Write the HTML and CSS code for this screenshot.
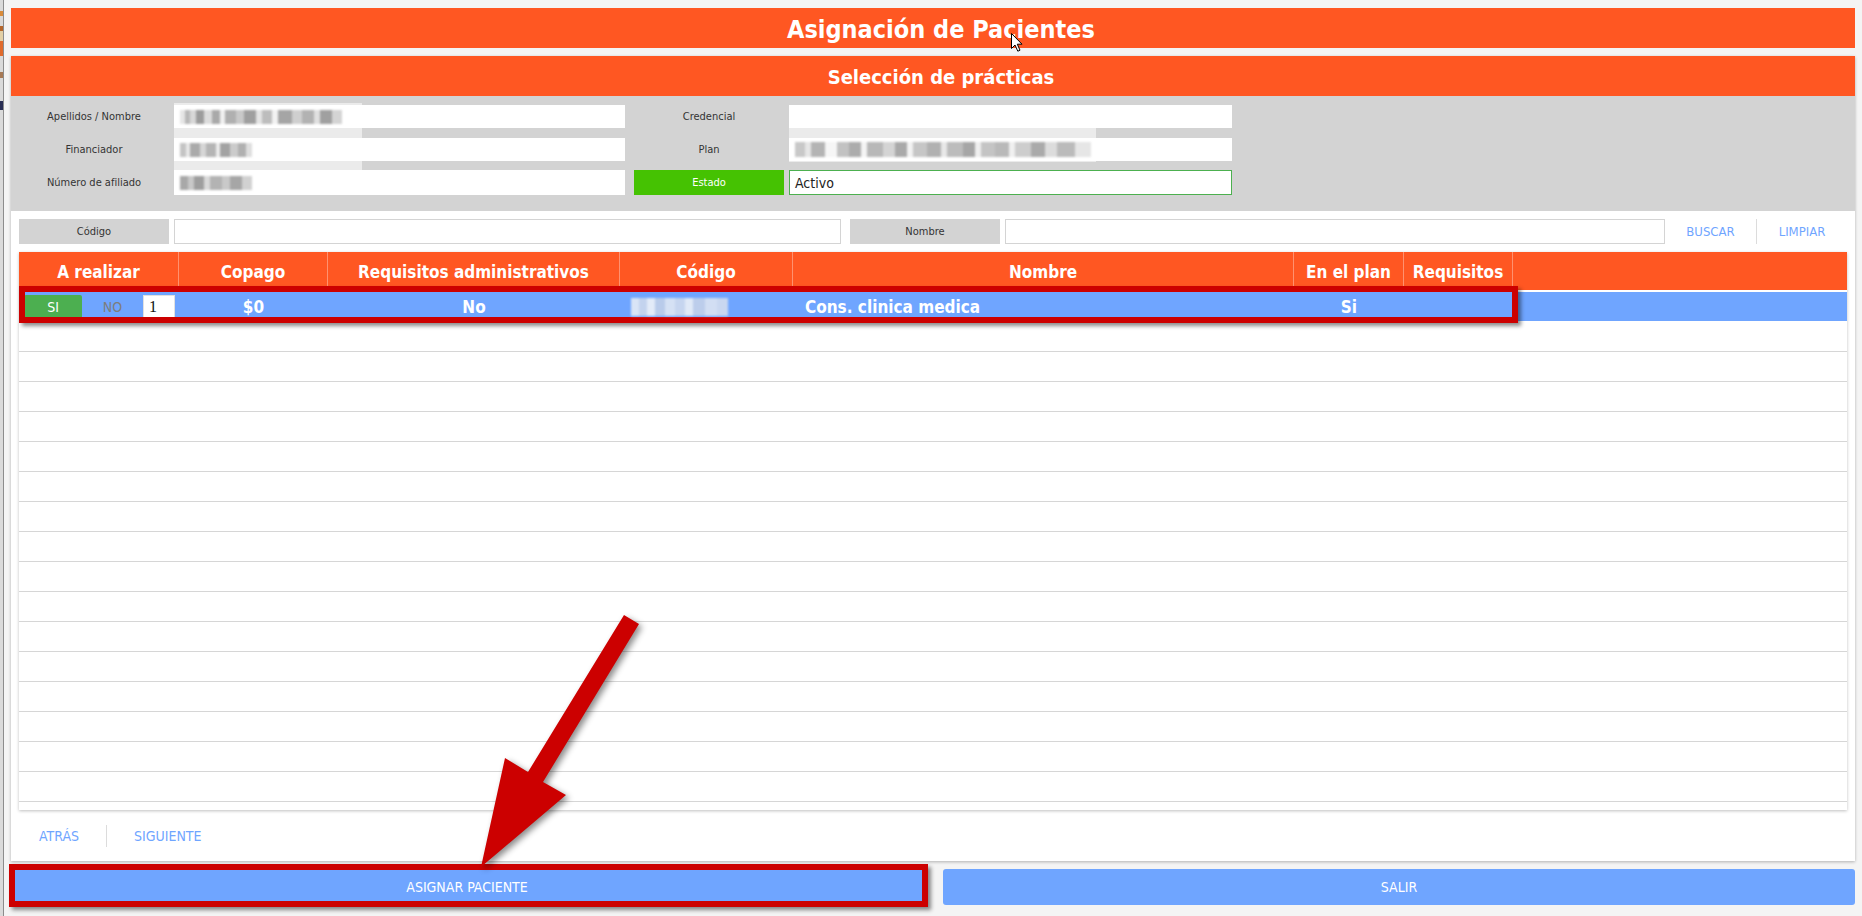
FILE: index.html
```html
<!DOCTYPE html>
<html lang="es">
<head>
<meta charset="utf-8">
<title>Asignación de Pacientes</title>
<link rel="stylesheet" href="styles.css">
</head>
<body>
<div class="edge"></div>
<div class="page">
  <header class="topbar">Asignación de Pacientes</header>

  <section class="card">
    <h2 class="card-title">Selección de prácticas</h2>

    <div class="info">
      <div class="info-row">
        <div class="pair pair-left">
          <span class="lbl">Apellidos / Nombre</span>
          <span class="val"><i class="mosaic m-name"></i></span>
        </div>
        <div class="pair pair-right">
          <span class="lbl">Credencial</span>
          <span class="val"></span>
        </div>
      </div>
      <div class="info-row">
        <div class="pair pair-left">
          <span class="lbl">Financiador</span>
          <span class="val"><i class="mosaic m-short"></i></span>
        </div>
        <div class="pair pair-right">
          <span class="lbl">Plan</span>
          <span class="val"><i class="mosaic m-plan"></i></span>
        </div>
      </div>
      <div class="info-row info-row-last">
        <div class="pair pair-left">
          <span class="lbl">Número de afiliado</span>
          <span class="val"><i class="mosaic m-short m-alt"></i></span>
        </div>
        <div class="pair pair-right">
          <span class="lbl lbl-state">Estado</span>
          <span class="val val-state">Activo</span>
        </div>
      </div>
      <div class="smear smear-a"></div>
      <div class="smear smear-b"></div>
    </div>

    <div class="search">
      <span class="s-lbl">Código</span>
      <span class="s-in s-code"></span>
      <span class="s-lbl">Nombre</span>
      <span class="s-in s-name"></span>
      <button class="s-btn s-find">BUSCAR</button>
      <span class="s-sep"></span>
      <button class="s-btn s-clear">LIMPIAR</button>
    </div>

    <div class="grid-wrap">
      <div class="grid-scroll">
        <div class="g-row g-head">
          <div class="g-cell">A realizar</div>
          <div class="g-cell">Copago</div>
          <div class="g-cell">Requisitos administrativos</div>
          <div class="g-cell">Código</div>
          <div class="g-cell">Nombre</div>
          <div class="g-cell">En el plan</div>
          <div class="g-cell">Requisitos</div>
          <div class="g-cell g-fill"></div>
        </div>
        <div class="g-row g-sel">
          <div class="g-cell g-choice">
            <span class="opt opt-on">SI</span>
            <span class="opt opt-off">NO</span>
            <span class="qty">1</span>
          </div>
          <div class="g-cell">$0</div>
          <div class="g-cell">No</div>
          <div class="g-cell g-code"><i class="mosaic m-code"></i></div>
          <div class="g-cell g-left">Cons. clinica medica</div>
          <div class="g-cell">Si</div>
          <div class="g-cell"></div>
          <div class="g-cell"></div>
        </div>
        <div class="g-row"></div>
        <div class="g-row"></div>
        <div class="g-row"></div>
        <div class="g-row"></div>
        <div class="g-row"></div>
        <div class="g-row"></div>
        <div class="g-row"></div>
        <div class="g-row"></div>
        <div class="g-row"></div>
        <div class="g-row"></div>
        <div class="g-row"></div>
        <div class="g-row"></div>
        <div class="g-row"></div>
        <div class="g-row"></div>
        <div class="g-row"></div>
        <div class="g-row"></div>
      </div>
      <div class="mark mark-row"></div>
    </div>

    <nav class="pager">
      <button class="pg-btn">ATRÁS</button>
      <span class="pg-sep"></span>
      <button class="pg-btn">SIGUIENTE</button>
    </nav>
  </section>

  <div class="actions">
    <div class="action-main">
      <button class="btn">ASIGNAR PACIENTE</button>
      <div class="mark mark-btn"></div>
    </div>
    <button class="btn">SALIR</button>
  </div>
</div>

<!-- callout arrow pointing at the assign button -->
<svg class="arrow" width="200" height="280" viewBox="0 0 200 280">
  <polygon points="154,10 169,19 73,177 96,190 11,262 35,153 58,167" fill="#cc0000"/>
</svg>

<!-- mouse pointer -->
<svg class="cursor" width="14" height="20" viewBox="0 0 14 20">
  <path d="M0.5 0.5 L0.5 15.5 L4 12 L6.8 18.2 L9 17.2 L6.3 11.2 L11 11.2 Z" fill="#fff" stroke="#000" stroke-width="1" stroke-linejoin="round"/>
</svg>
</body>
</html>
```

FILE: styles.css
```css
* {
  box-sizing: border-box;
}

html,
body {
  margin: 0;
}

body {
  position: relative;
  display: flex;
  height: 916px;
  overflow: hidden;
  background: #f4f4f4;
  font-family: "DejaVu Sans Condensed", "DejaVu Sans", sans-serif;
  color: #333;
}

button {
  font-family: inherit;
  border: none;
  background: none;
  padding: 0;
  cursor: pointer;
}

/* sliver of the window behind */
.edge {
  flex: none;
  width: 4px;
  border-right: 1px solid #8c8c8c;
  background: linear-gradient(180deg,
      #dadada 0 11px,
      #d98b3a 11px 16px,
      #dadada 16px 26px,
      #b5662c 26px 31px,
      #e2cfa6 31px 41px,
      #e06a2c 41px 56px,
      #dadada 56px 72px,
      #a87a56 72px 78px,
      #dadada 78px 101px,
      #2a2f55 101px 110px,
      #dadada 110px);
}

.page {
  flex: 1;
  min-width: 0;
  padding: 8px 7px 0;
}

.topbar {
  height: 40px;
  line-height: 40px;
  padding: 2px 0 0 16px;
  margin-bottom: 8px;
  background: #ff5722;
  color: #fff;
  text-align: center;
  font-size: 25px;
  font-weight: bold;
}

/* main card */
.card {
  position: relative;
  background: #fff;
  box-shadow: 0 1px 3px rgba(0, 0, 0, 0.28);
}

.card-title {
  margin: 0;
  height: 40px;
  line-height: 40px;
  padding: 1px 0 0 16px;
  background: #ff5722;
  color: #fff;
  text-align: center;
  font-size: 20px;
  font-weight: bold;
}

/* patient data */
.info {
  position: relative;
  display: flex;
  flex-direction: column;
  gap: 10px;
  padding: 9px 8px 16px;
  background: #d3d3d3;
}

.info-row {
  display: flex;
  gap: 9px;
  height: 23px;
}

.info-row-last {
  height: 25px;
  margin-top: -1px;
}

.pair {
  display: flex;
  gap: 5px;
}

.lbl {
  width: 150px;
  display: flex;
  align-items: center;
  justify-content: center;
  font-size: 11px;
  color: #333;
}

.val {
  display: flex;
  align-items: center;
  padding-left: 6px;
  background: #fff;
}

.pair-left .val {
  width: 451px;
}

.pair-right .val {
  width: 443px;
}

.lbl-state {
  background: #45c202;
  color: #fff;
}

.val-state {
  border: 1px solid #4cb04f;
  padding-left: 5px;
  font-size: 14px;
  color: #222;
}

.smear {
  position: absolute;
  z-index: 1;
  background: rgba(255, 255, 255, 0.55);
}

.smear-a {
  left: 163px;
  top: 7px;
  width: 188px;
  height: 72px;
}

.smear-b {
  left: 778px;
  top: 9px;
  width: 307px;
  height: 57px;
}

/* redacted values */
.mosaic {
  position: relative;
  z-index: 2;
  display: inline-block;
  height: 14px;
  filter: blur(0.8px);
}

.m-name {
  width: 162px;
  background: linear-gradient(90deg,
      #e6e6e6 0 5px, #b8b8b8 5px 10px, #d8d8d8 10px 16px, #9c9c9c 16px 24px,
      #dcdcdc 24px 32px, #a9a9a9 32px 40px, #f0f0f0 40px 45px, #b0b0b0 45px 56px,
      #c9c9c9 56px 64px, #9f9f9f 64px 76px, #e4e4e4 76px 82px, #bdbdbd 82px 92px,
      #f2f2f2 92px 98px, #a5a5a5 98px 112px, #cfcfcf 112px 122px, #b2b2b2 122px 134px,
      #e0e0e0 134px 140px, #a0a0a0 140px 152px, #d4d4d4 152px 162px);
}

.m-short {
  width: 72px;
  background: linear-gradient(90deg,
      #c4c4c4 0 6px, #e8e8e8 6px 10px, #aaaaaa 10px 20px, #d6d6d6 20px 26px,
      #b5b5b5 26px 36px, #ededed 36px 40px, #a3a3a3 40px 50px, #cbcbcb 50px 58px,
      #b0b0b0 58px 66px, #dedede 66px 72px);
}

.m-alt {
  background: linear-gradient(90deg,
      #a8a8a8 0 8px, #c8c8c8 8px 14px, #9e9e9e 14px 24px, #d9d9d9 24px 30px,
      #b3b3b3 30px 42px, #c9c9c9 42px 50px, #a6a6a6 50px 62px, #d1d1d1 62px 72px);
}

.m-plan {
  width: 296px;
  height: 15px;
  background: linear-gradient(90deg,
      #c8c8c8 0 10px, #e6e6e6 10px 16px, #b4b4b4 16px 30px, #f6f6f6 30px 42px,
      #c2c2c2 42px 54px, #acacac 54px 66px, #f4f4f4 66px 72px, #b8b8b8 72px 88px,
      #d4d4d4 88px 100px, #a9a9a9 100px 112px, #f2f2f2 112px 118px, #c6c6c6 118px 132px,
      #b1b1b1 132px 146px, #e8e8e8 146px 152px, #bcbcbc 152px 168px, #a6a6a6 168px 180px,
      #efefef 180px 186px, #c4c4c4 186px 200px, #b9b9b9 200px 214px, #f0f0f0 214px 220px,
      #cdcdcd 220px 236px, #aaaaaa 236px 250px, #dcdcdc 250px 262px, #bbbbbb 262px 280px,
      #e6e6e6 280px 296px);
}

.m-code {
  width: 97px;
  height: 18px;
  background: linear-gradient(90deg,
      #d9e4f6 0 8px, #c3d3ee 8px 16px, #e3ebf8 16px 24px, #b9cbea 24px 34px,
      #d5e1f4 34px 44px, #c6d5ef 44px 54px, #e0e9f7 54px 62px, #bccdeb 62px 74px,
      #d2def3 74px 86px, #c9d7f0 86px 97px);
}

/* search bar */
.search {
  display: flex;
  height: 25px;
  margin: 8px 8px 0;
}

.s-lbl {
  width: 150px;
  display: flex;
  align-items: center;
  justify-content: center;
  background: #d3d3d3;
  font-size: 11px;
  color: #333;
}

.s-in {
  margin-left: 5px;
  border: 1px solid #d4d4d4;
  background: #fff;
}

.s-code {
  width: 667px;
  margin-right: 9px;
}

.s-name {
  flex: 1;
}

.s-btn {
  width: 91px;
  color: #6fa5ff;
  font-size: 13px;
}

.s-clear {
  width: 90px;
}

.s-sep {
  width: 1px;
  background: #dcdcdc;
}

/* practices grid */
.grid-wrap {
  position: relative;
  margin: 8px 8px 0;
  box-shadow: 0 1px 3px rgba(0, 0, 0, 0.25);
}

.grid-scroll {
  height: 558px;
  overflow: hidden;
}

.g-row {
  display: grid;
  grid-template-columns: 160px 149px 292px 173px 501px 110px 109px 1fr;
  height: 30px;
  border-bottom: 1px solid #d6d6d6;
}

.g-cell {
  display: flex;
  align-items: center;
  justify-content: center;
  min-width: 0;
  white-space: nowrap;
}

.g-head {
  height: 40px;
  background: #ff5722;
  border-bottom: 2px solid #fff;
}

.g-head .g-cell {
  padding-top: 2px;
  color: #fff;
  font-size: 17px;
  font-weight: bold;
  border-right: 1px solid rgba(255, 255, 255, 0.35);
}

.g-head .g-fill {
  border-right: none;
}

.g-sel {
  background: #6fa5ff;
  border-bottom-color: #fff;
}

.g-sel .g-cell {
  color: #fff;
  font-size: 17px;
  font-weight: bold;
}

.g-sel .g-left {
  justify-content: flex-start;
  padding-left: 12px;
}

.g-sel .g-code {
  justify-content: flex-start;
  padding-left: 11px;
}

.g-sel .g-choice {
  justify-content: flex-start;
  padding-left: 5px;
  font-weight: normal;
}

.opt {
  display: flex;
  align-items: center;
  justify-content: center;
  height: 24px;
  font-size: 14px;
}

.opt-on {
  width: 58px;
  background: #4caf50;
  color: #fff;
  border-radius: 2px;
}

.opt-off {
  width: 61px;
  color: #7d7d7d;
}

.qty {
  width: 32px;
  height: 24px;
  padding: 2px 0 0 5px;
  background: #fff;
  border: 1px solid #e1e1e1;
  color: #111;
  font-family: "Liberation Serif", serif;
  font-size: 16px;
  font-weight: normal;
}

/* pagination */
.pager {
  display: flex;
  align-items: center;
  height: 51px;
  padding-left: 1px;
}

.pg-btn {
  padding: 0 27px;
  color: #6fa5ff;
  font-size: 14px;
}

.pg-sep {
  width: 1px;
  height: 22px;
  background: #dcdcdc;
}

/* bottom actions */
.actions {
  display: flex;
  gap: 20px;
  margin-top: 8px;
}

.action-main {
  position: relative;
  flex: 1;
  display: flex;
}

.btn {
  flex: 1;
  height: 36px;
  border-radius: 3px;
  background: #6fa5ff;
  color: #fff;
  font-size: 14px;
}

/* red highlight frames */
.mark {
  position: absolute;
  border: 6px solid #cc0000;
  box-shadow: 3px 3px 4px rgba(0, 0, 0, 0.45);
  pointer-events: none;
}

.mark-row {
  left: 0;
  top: 34px;
  width: 1499px;
  height: 37px;
}

.mark-btn {
  left: -2px;
  right: -5px;
  top: -5px;
  bottom: -2px;
}

.arrow {
  position: absolute;
  left: 470px;
  top: 605px;
  filter: drop-shadow(3px 3px 3px rgba(0, 0, 0, 0.45));
}

.cursor {
  position: absolute;
  left: 1011px;
  top: 33px;
}
```
